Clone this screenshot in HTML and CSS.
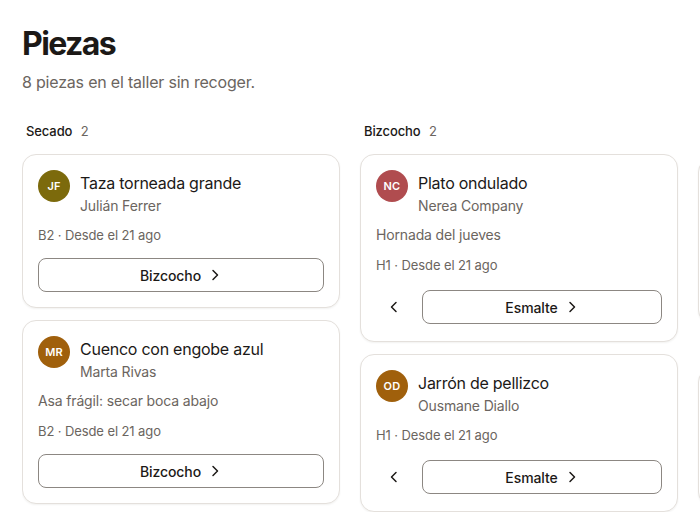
FILE: index.html
```html
<!DOCTYPE html>
<html lang="es">
<head>
<meta charset="utf-8">
<title>Piezas</title>
<link rel="stylesheet" href="styles.css">
</head>
<body>
<main class="page">
  <header class="page-head">
    <h1 class="title">Piezas</h1>
    <p class="subtitle">8 piezas en el taller sin recoger.</p>
  </header>
  <div class="board">
    <section class="column">
      <h2 class="col-head">Secado <span class="count">2</span></h2>
      <div class="cards">
        <article class="card">
          <div class="card-head">
            <span class="avatar olive">JF</span>
            <div class="who">
              <div class="piece">Taza torneada grande</div>
              <div class="owner">Julián Ferrer</div>
            </div>
          </div>
          <div class="meta">B2 · Desde el 21 ago</div>
          <div class="actions">
            <button class="next">Bizcocho <svg class="chev" viewBox="0 0 14 14"><path d="M5 2.5 9.5 7 5 11.5"/></svg></button>
          </div>
        </article>
        <article class="card">
          <div class="card-head">
            <span class="avatar amber">MR</span>
            <div class="who">
              <div class="piece">Cuenco con engobe azul</div>
              <div class="owner">Marta Rivas</div>
            </div>
          </div>
          <div class="note">Asa frágil: secar boca abajo</div>
          <div class="meta">B2 · Desde el 21 ago</div>
          <div class="actions">
            <button class="next">Bizcocho <svg class="chev" viewBox="0 0 14 14"><path d="M5 2.5 9.5 7 5 11.5"/></svg></button>
          </div>
        </article>
      </div>
    </section>
    <section class="column">
      <h2 class="col-head">Bizcocho <span class="count">2</span></h2>
      <div class="cards">
        <article class="card">
          <div class="card-head">
            <span class="avatar rose">NC</span>
            <div class="who">
              <div class="piece">Plato ondulado</div>
              <div class="owner">Nerea Company</div>
            </div>
          </div>
          <div class="note">Hornada del jueves</div>
          <div class="meta">H1 · Desde el 21 ago</div>
          <div class="actions">
            <button class="back" aria-label="Volver"><svg class="chev" viewBox="0 0 14 14"><path d="M9 2.5 4.5 7 9 11.5"/></svg></button>
            <button class="next">Esmalte <svg class="chev" viewBox="0 0 14 14"><path d="M5 2.5 9.5 7 5 11.5"/></svg></button>
          </div>
        </article>
        <article class="card">
          <div class="card-head">
            <span class="avatar amber">OD</span>
            <div class="who">
              <div class="piece">Jarrón de pellizco</div>
              <div class="owner">Ousmane Diallo</div>
            </div>
          </div>
          <div class="meta">H1 · Desde el 21 ago</div>
          <div class="actions">
            <button class="back" aria-label="Volver"><svg class="chev" viewBox="0 0 14 14"><path d="M9 2.5 4.5 7 9 11.5"/></svg></button>
            <button class="next">Esmalte <svg class="chev" viewBox="0 0 14 14"><path d="M5 2.5 9.5 7 5 11.5"/></svg></button>
          </div>
        </article>
      </div>
    </section>
    <section class="column column-peek" aria-hidden="true">
      <div class="col-head-space"></div>
      <div class="cards peek-cards">
        <div class="card shell shell-a"></div>
        <div class="card shell shell-b"></div>
      </div>
    </section>
  </div>
</main>
</body>
</html>
```
FILE: styles.css
```css
* { box-sizing: border-box; }
html, body { margin: 0; padding: 0; background: #ffffff; }
body {
  font-family: Inter, "Noto Sans", "Liberation Sans", sans-serif;
  color: #1c1917;
  overflow: hidden;
  width: 700px;
  height: 530px;
}
.page { padding: 26px 0 0 22px; }
.title {
  margin: 0;
  font-size: 32px;
  line-height: 36px;
  font-weight: 700;
  letter-spacing: -1.6px;
  color: #1c1917;
}
.subtitle {
  margin: 9px 0 0;
  font-size: 16px;
  line-height: 22px;
  letter-spacing: -0.2px;
  color: #6b6560;
}
.board {
  display: flex;
  gap: 20px;
  margin-top: 29px;
  overflow: hidden;
}
.column {
  flex: 0 0 318px;
  display: flex;
  flex-direction: column;
}
.col-head {
  margin: 0 0 14px 4px;
  font-size: 13px;
  line-height: 18px;
  font-weight: 500;
  letter-spacing: -0.1px;
  color: #1c1917;
}
.col-head-space { height: 18px; margin-bottom: 14px; }
.count {
  margin-left: 5px;
  font-weight: 400;
  color: #6b6560;
}
.cards {
  display: flex;
  flex-direction: column;
  gap: 12px;
}
.card {
  border: 1px solid #e4e0dc;
  border-radius: 14px;
  background: #fff;
  box-shadow: 0 1px 2px rgba(40, 30, 20, 0.06);
  padding: 15px 15px 15px 15px;
}
.peek-cards { gap: 44px; padding-top: 4px; }
.shell-a { height: 166px; }
.shell-b { height: 138px; }
.card-head {
  display: flex;
  align-items: flex-start;
  gap: 10px;
}
.avatar {
  flex: 0 0 32px;
  width: 32px;
  height: 32px;
  border-radius: 50%;
  color: #fff;
  font-size: 11px;
  font-weight: 600;
  display: flex;
  align-items: center;
  justify-content: center;
  letter-spacing: 0.2px;
}
.olive { background: #7c6a0c; }
.amber { background: #a0600c; }
.rose { background: #b04c4f; }
.who { display: flex; flex-direction: column; padding-top: 2px; }
.piece {
  font-size: 16px;
  line-height: 22px;
  letter-spacing: -0.25px;
  color: #1c1917;
}
.owner {
  font-size: 14px;
  line-height: 20px;
  letter-spacing: -0.15px;
  color: #6b6560;
  margin-top: 2px;
}
.note {
  margin-top: 9px;
  font-size: 14px;
  line-height: 20px;
  letter-spacing: -0.15px;
  color: #6b6560;
}
.meta {
  margin-top: 9px;
  font-size: 13px;
  line-height: 20px;
  letter-spacing: -0.1px;
  color: #6b6560;
}
.note + .meta { margin-top: 10px; }
.actions {
  display: flex;
  align-items: center;
  gap: 10px;
  margin-top: 13px;
}
button {
  font-family: inherit;
  cursor: pointer;
}
.next {
  flex: 1;
  height: 34px;
  border: 1px solid #8c8782;
  border-radius: 8px;
  background: #fff;
  font-size: 14px;
  font-weight: 450;
  letter-spacing: -0.1px;
  color: #1c1917;
  display: flex;
  align-items: center;
  justify-content: center;
  gap: 7px;
  padding: 0 12px;
}
.back {
  flex: 0 0 36px;
  height: 38px;
  border: none;
  background: transparent;
  display: flex;
  align-items: center;
  justify-content: center;
  padding: 0;
  color: #1c1917;
}
.chev {
  width: 14px;
  height: 14px;
  fill: none;
  stroke: currentColor;
  stroke-width: 1.5;
  stroke-linecap: round;
  stroke-linejoin: round;
}
```
